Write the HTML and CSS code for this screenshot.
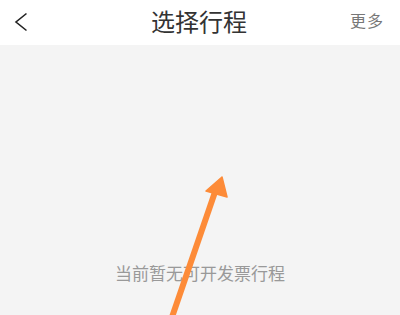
FILE: index.html
```html
<!DOCTYPE html>
<html lang="zh">
<head>
<meta charset="utf-8">
<link rel="stylesheet" href="styles.css">
</head>
<body>
<div class="page">
  <header class="nav">
    <div class="nav-left">
      <svg class="back" width="16" height="20" viewBox="0 0 16 20">
        <polyline points="12.5,1.5 2,10 12.5,18.5" fill="none" stroke="#222" stroke-width="1.6" stroke-linejoin="miter"/>
      </svg>
    </div>
    <h1 class="title">选择行程</h1>
    <div class="nav-right">更多</div>
  </header>
  <main class="content">
    <p class="empty">当前暂无可开发票行程</p>
  </main>
  <svg class="arrow" width="400" height="315" viewBox="0 0 400 315">
    <line x1="171" y1="320" x2="215" y2="192" stroke="#fd8b38" stroke-width="6"/>
    <polygon points="222,177 206,191 227,197" fill="#fd8b38" stroke="#fd8b38" stroke-width="1.5" stroke-linejoin="round"/>
  </svg>
</div>
</body>
</html>
```
FILE: styles.css
```css
html, body {
  margin: 0;
  padding: 0;
}
body {
  width: 400px;
  height: 315px;
  overflow: hidden;
  background: #f4f4f4;
  font-family: "Noto Sans CJK SC", "Noto Sans", sans-serif;
}
.page {
  position: relative;
  width: 400px;
  height: 315px;
  display: flex;
  flex-direction: column;
}
.nav {
  height: 45px;
  background: #ffffff;
  display: flex;
  align-items: center;
  justify-content: space-between;
  padding: 0 16px 0 14px;
  box-sizing: border-box;
  flex-shrink: 0;
}
.nav-left {
  width: 60px;
  display: flex;
  align-items: center;
  padding-bottom: 2px;
}
.back {
  display: block;
}
.title {
  margin: 0;
  font-size: 24px;
  font-weight: 400;
  color: #333;
  line-height: 30px;
  padding-bottom: 4px;
  letter-spacing: 0;
}
.nav-right {
  width: 60px;
  text-align: right;
  font-size: 16px;
  color: #777;
  line-height: 24px;
  padding-bottom: 5px;
  letter-spacing: 1px;
}
.content {
  flex: 1;
  display: flex;
  flex-direction: column;
  align-items: center;
  padding-top: 216px;
  box-sizing: border-box;
}
.empty {
  margin: 0;
  font-size: 17px;
  line-height: 24px;
  color: #999;
}
.arrow {
  position: absolute;
  left: 0;
  top: 0;
  pointer-events: none;
}
```
